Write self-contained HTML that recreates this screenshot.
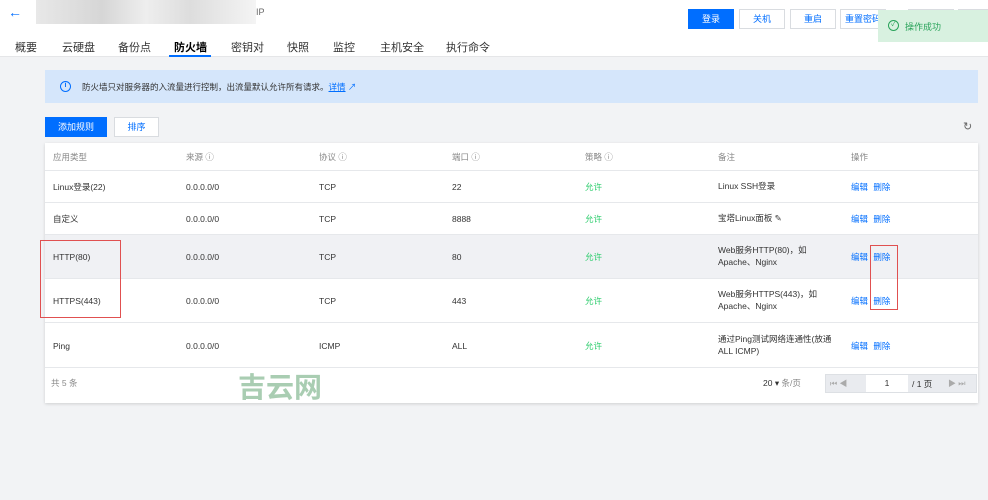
<!DOCTYPE html><html><head><meta charset="utf-8"><style>
*{margin:0;padding:0;box-sizing:border-box}
body{width:988px;height:500px;overflow:hidden;background:#f2f3f5;font-family:"Liberation Sans","Noto Sans CJK SC",sans-serif;font-size:9px;color:#333;position:relative}
.a{position:absolute;white-space:nowrap}
.hdr{position:absolute;left:0;top:0;width:988px;height:57px;background:#fff;border-bottom:1px solid #e5e6e8}
.tab{position:absolute;top:39px;font-size:11px;color:#333}
.btn{position:absolute;top:9px;height:20px;width:46px;border:1px solid #d9dce0;background:#fff;color:#006eff;font-size:9px;text-align:center;line-height:18px}
.tbl{position:absolute;left:45px;top:143px;width:933px;height:260px;background:#fff;box-shadow:0 1px 3px rgba(0,0,0,.15)}
.row{position:absolute;left:0;width:933px;border-bottom:1px solid #e6e8eb}
.c{position:absolute;font-size:8.5px;color:#333;line-height:12px}
.g{color:#29cc6a}.b{color:#006eff;word-spacing:3px}.h{color:#888}
</style></head><body>
<div class="hdr">
<div class="a" style="left:8px;top:4px;font-size:14px;color:#006eff">←</div>
<div class="a" style="left:36px;top:0;width:220px;height:24px;background:linear-gradient(90deg,#e8e8e8,#d6d6d6 30%,#eee 50%,#ddd 70%,#f4f4f4)"></div>
<div class="a" style="left:256px;top:7px;font-size:9px;color:#666">IP</div>
<div class="tab" style="left:15px">概要</div>
<div class="tab" style="left:62px">云硬盘</div>
<div class="tab" style="left:118px">备份点</div>
<div class="tab" style="left:174px;color:#000;font-weight:bold">防火墙</div>
<div class="a" style="left:169px;top:55px;width:42px;height:2px;background:#006eff"></div>
<div class="tab" style="left:231px">密钥对</div>
<div class="tab" style="left:287px">快照</div>
<div class="tab" style="left:333px">监控</div>
<div class="tab" style="left:380px">主机安全</div>
<div class="tab" style="left:446px">执行命令</div>
<div class="btn" style="left:688px;background:#006eff;color:#fff;border-color:#006eff">登录</div>
<div class="btn" style="left:739px">关机</div>
<div class="btn" style="left:790px">重启</div>
<div class="btn" style="left:840px">重置密码</div>
<div class="btn" style="left:908px"></div>
<div class="btn" style="left:958px"></div>
</div>
<div class="a" style="left:878px;top:10px;width:110px;height:32px;background:#d8f1e0"><span style="position:absolute;left:10px;top:10px;width:11px;height:11px;border:1.5px solid #29a35a;border-radius:50%;color:#29a35a;font-size:7px;line-height:8px;text-align:center">✓</span><span style="position:absolute;left:27px;top:10px;color:#29a35a;font-size:9px">操作成功</span></div>
<div class="a" style="left:45px;top:70px;width:933px;height:33px;background:#d5e6fb"></div>
<div class="a" style="left:60px;top:81px;width:11px;height:11px;border:1.3px solid #006eff;border-radius:50%;color:#006eff;font-size:7px;line-height:8px;text-align:center;font-weight:bold">i</div>
<div class="a" style="left:82px;top:81px;font-size:8.5px;color:#333">防火墙只对服务器的入流量进行控制，出流量默认允许所有请求。<span style="color:#006eff;text-decoration:underline">详情</span> <span style="color:#006eff">↗</span></div>
<div class="a" style="left:45px;top:117px;width:62px;height:20px;background:#006eff;color:#fff;text-align:center;line-height:20px">添加规则</div>
<div class="a" style="left:114px;top:117px;width:45px;height:20px;background:#fff;border:1px solid #d9dce0;color:#006eff;text-align:center;line-height:18px">排序</div>
<div class="a" style="left:963px;top:120px;font-size:11px;color:#666">↻</div>
<div class="tbl">
<div class="row" style="top:0;height:28px"><span class="c h" style="left:8px;top:8px">应用类型</span><span class="c h" style="left:141px;top:8px">来源 ⓘ</span><span class="c h" style="left:274px;top:8px">协议 ⓘ</span><span class="c h" style="left:407px;top:8px">端口 ⓘ</span><span class="c h" style="left:540px;top:8px">策略 ⓘ</span><span class="c h" style="left:673px;top:8px">备注</span><span class="c h" style="left:806px;top:8px">操作</span></div>
<div class="row" style="top:28px;height:32px"><span class="c" style="left:8px;top:10px">Linux登录(22)</span><span class="c" style="left:141px;top:10px">0.0.0.0/0</span><span class="c" style="left:274px;top:10px">TCP</span><span class="c" style="left:407px;top:10px">22</span><span class="c g" style="left:540px;top:10px">允许</span><span class="c" style="left:673px;top:9px">Linux SSH登录</span><span class="c b" style="left:806px;top:10px">编辑 删除</span></div>
<div class="row" style="top:60px;height:32px"><span class="c" style="left:8px;top:10px">自定义</span><span class="c" style="left:141px;top:10px">0.0.0.0/0</span><span class="c" style="left:274px;top:10px">TCP</span><span class="c" style="left:407px;top:10px">8888</span><span class="c g" style="left:540px;top:10px">允许</span><span class="c" style="left:673px;top:9px">宝塔Linux面板 ✎</span><span class="c b" style="left:806px;top:10px">编辑 删除</span></div>
<div class="row" style="top:92px;height:44px;background:#f0f1f4"><span class="c" style="left:8px;top:16px">HTTP(80)</span><span class="c" style="left:141px;top:16px">0.0.0.0/0</span><span class="c" style="left:274px;top:16px">TCP</span><span class="c" style="left:407px;top:16px">80</span><span class="c g" style="left:540px;top:16px">允许</span><span class="c" style="left:673px;top:9px">Web服务HTTP(80)，如<br>Apache、Nginx</span><span class="c b" style="left:806px;top:16px">编辑 删除</span></div>
<div class="row" style="top:136px;height:44px"><span class="c" style="left:8px;top:16px">HTTPS(443)</span><span class="c" style="left:141px;top:16px">0.0.0.0/0</span><span class="c" style="left:274px;top:16px">TCP</span><span class="c" style="left:407px;top:16px">443</span><span class="c g" style="left:540px;top:16px">允许</span><span class="c" style="left:673px;top:9px">Web服务HTTPS(443)，如<br>Apache、Nginx</span><span class="c b" style="left:806px;top:16px">编辑 删除</span></div>
<div class="row" style="top:180px;height:45px"><span class="c" style="left:8px;top:17px">Ping</span><span class="c" style="left:141px;top:17px">0.0.0.0/0</span><span class="c" style="left:274px;top:17px">ICMP</span><span class="c" style="left:407px;top:17px">ALL</span><span class="c g" style="left:540px;top:17px">允许</span><span class="c" style="left:673px;top:10px">通过Ping测试网络连通性(放通<br>ALL ICMP)</span><span class="c b" style="left:806px;top:17px">编辑 删除</span></div>
<span class="c h" style="left:6px;top:234px">共 5 条</span>
<span class="a" style="left:193px;top:223px;font-size:28px;font-weight:bold;color:#a9cdb2">吉云网</span>
<span class="c" style="left:718px;top:234px">20 ▾ <span class="h">条/页</span></span>
<div class="a" style="left:780px;top:231px;width:152px;height:19px;background:#e9ebef;border:1px solid #dde0e4"><span style="position:absolute;left:4px;top:3px;color:#aaa;font-size:8px">⏮ ◀</span><div style="position:absolute;left:40px;top:0;width:42px;height:17px;background:#fff;text-align:center;line-height:17px;font-size:8.5px">1</div><span style="position:absolute;left:86px;top:3px;font-size:8.5px">/ 1 页</span><span style="position:absolute;left:122px;top:3px;color:#aaa;font-size:8px">▶ ⏭</span></div>
</div>
<div class="a" style="left:40px;top:240px;width:81px;height:78px;border:1px solid #e05050"></div>
<div class="a" style="left:870px;top:245px;width:28px;height:65px;border:1px solid #e05050"></div>
</body></html>
